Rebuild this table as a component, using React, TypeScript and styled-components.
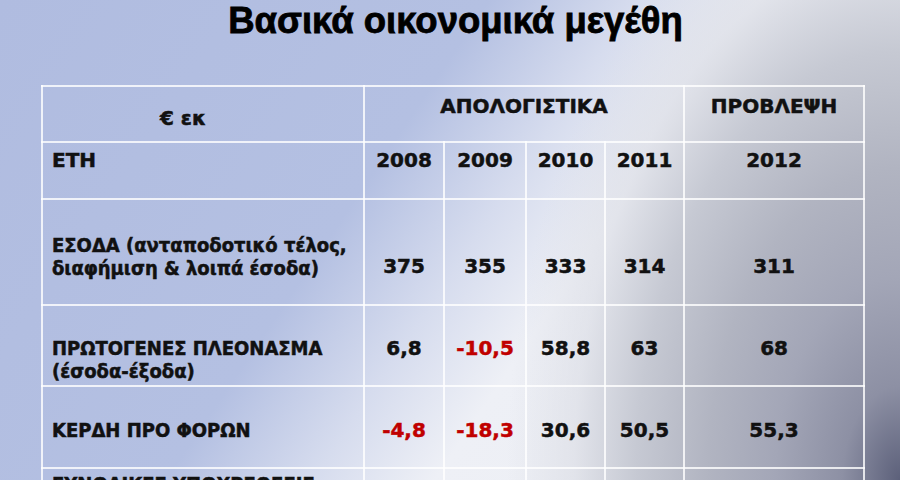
import React from "react";
import styled, { createGlobalStyle } from "styled-components";

const Global = createGlobalStyle`
  html, body { margin: 0; padding: 0; }
  body { width: 900px; height: 480px; overflow: hidden; }
`;

const Slide = styled.div`
  width: 900px;
  height: 480px;
  overflow: hidden;
  box-sizing: border-box;
  padding: 0 36px 0 41px;
  background:
    radial-gradient(
      480px 780px at 100% 100%,
      #5c607a 0%,
      #8d90a4 12%,
      #a3a6b7 26%,
      #b1b4c1 40%,
      #c6c9d3 55%,
      rgba(218, 220, 228, 0.6) 68%,
      rgba(234, 236, 241, 0) 82%
    ),
    linear-gradient(
      124deg,
      #b0bce0 0%,
      #b4c0e2 40%,
      #d6dcee 52%,
      #eef0f6 62%,
      #eaecf1 100%
    );
`;

const Title = styled.h1`
  margin: 0 -36px 0 -41px;
  height: 85px;
  padding: 0 0 0 11px;
  box-sizing: border-box;
  font-family: "Liberation Sans", Arial, sans-serif;
  font-weight: 700;
  font-size: 36.5px;
  line-height: normal;
  text-align: center;
  color: #000;
  -webkit-text-stroke: 0.8px #000;
`;

const Table = styled.table`
  width: 823px;
  border-collapse: collapse;
  table-layout: fixed;
  font-family: "DejaVu Sans", Verdana, sans-serif;
  font-weight: 700;
  font-size: 20px;
  line-height: 23px;
  color: #111;
`;

const Row = styled.tr<{ $h: number }>`
  height: ${(p) => p.$h}px;
`;

const Cell = styled.td<{ $pt: number; $align?: "left" | "center"; $red?: boolean; $pl?: number; $pr?: number }>`
  border: 2px solid rgba(255, 255, 255, 0.8);
  vertical-align: top;
  box-sizing: border-box;
  padding: ${(p) => p.$pt}px ${(p) => p.$pr ?? 2}px 0 ${(p) => p.$pl ?? 2}px;
  text-align: ${(p) => p.$align ?? "center"};
  color: ${(p) => (p.$red ? "#c00000" : "#111")};
  -webkit-text-stroke: 0.5px ${(p) => (p.$red ? "#c00000" : "#111")};
  white-space: nowrap;
`;

const Label = styled.div`
  font-family: "DejaVu Sans Condensed", "DejaVu Sans", Verdana, sans-serif;
  font-stretch: semi-condensed;
`;

type Val = { v: string; red?: boolean };
type DataRow = { label: string[]; h: number; pt: number; npt: number; vals: Val[] };

const years = ["2008", "2009", "2010", "2011"];

const rows: DataRow[] = [
  {
    label: ["ΕΣΟΔΑ (ανταποδοτικό τέλος,", "διαφήμιση & λοιπά έσοδα)"],
    h: 106,
    pt: 34,
    npt: 55,
    vals: [{ v: "375" }, { v: "355" }, { v: "333" }, { v: "314" }, { v: "311" }],
  },
  {
    label: ["ΠΡΩΤΟΓΕΝΕΣ ΠΛΕΟΝΑΣΜΑ", "(έσοδα-έξοδα)"],
    h: 81,
    pt: 31,
    npt: 31,
    vals: [{ v: "6,8" }, { v: "-10,5", red: true }, { v: "58,8" }, { v: "63" }, { v: "68" }],
  },
  {
    label: ["ΚΕΡΔΗ ΠΡΟ ΦΟΡΩΝ"],
    h: 82,
    pt: 32,
    npt: 32,
    vals: [{ v: "-4,8", red: true }, { v: "-18,3", red: true }, { v: "30,6" }, { v: "50,5" }, { v: "55,3" }],
  },
  {
    label: ["ΣΥΝΟΛΙΚΕΣ ΥΠΟΧΡΕΩΣΕΙΣ"],
    h: 90,
    pt: 4,
    npt: 4,
    vals: [{ v: "" }, { v: "" }, { v: "" }, { v: "" }, { v: "" }],
  },
];

export default function App() {
  return (
    <>
      <Global />
      <Slide>
        <Title>Βασικά οικονομικά μεγέθη</Title>
        <Table>
          <colgroup>
            <col style={{ width: 322 }} />
            <col style={{ width: 80 }} />
            <col style={{ width: 82 }} />
            <col style={{ width: 79 }} />
            <col style={{ width: 79 }} />
            <col style={{ width: 180 }} />
          </colgroup>
          <tbody>
            <Row $h={56}>
              <Cell $pt={20} $pr={42}>€ εκ</Cell>
              <Cell $pt={8} colSpan={4}>ΑΠΟΛΟΓΙΣΤΙΚΑ</Cell>
              <Cell $pt={8}>ΠΡΟΒΛΕΨΗ</Cell>
            </Row>
            <Row $h={57}>
              <Cell $pt={6} $align="left" $pl={9}>ΕΤΗ</Cell>
              {years.map((y) => (
                <Cell key={y} $pt={6}>{y}</Cell>
              ))}
              <Cell $pt={6}>2012</Cell>
            </Row>
            {rows.map((r, i) => (
              <Row key={i} $h={r.h}>
                <Cell $pt={r.pt} $align="left" $pl={9}>
                  {r.label.map((l, j) => (
                    <Label key={j}>{l}</Label>
                  ))}
                </Cell>
                {r.vals.map((val, j) => (
                  <Cell key={j} $pt={r.npt} $red={val.red}>
                    {val.v}
                  </Cell>
                ))}
              </Row>
            ))}
          </tbody>
        </Table>
      </Slide>
    </>
  );
}
